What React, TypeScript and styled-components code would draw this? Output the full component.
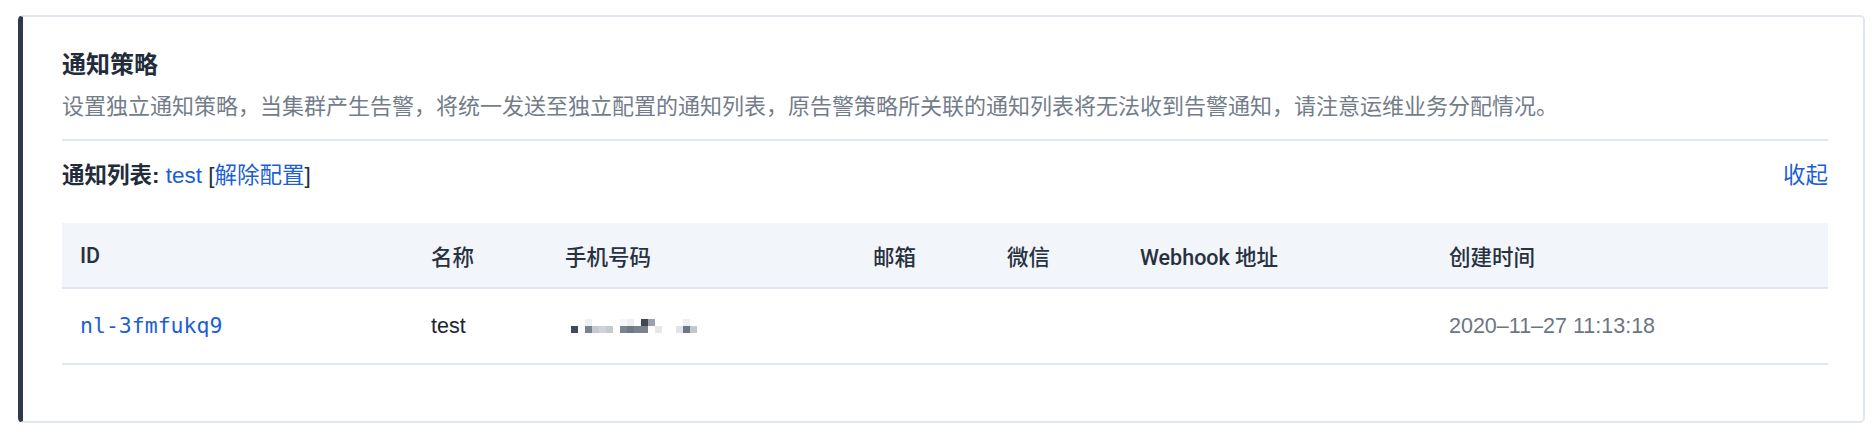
import styled, { createGlobalStyle } from "styled-components";

const GlobalStyle = createGlobalStyle`
  body {
    margin: 0;
    background: #ffffff;
    font-family: "Liberation Sans", "Noto Sans CJK SC", sans-serif;
  }
`;

interface Receiver {
  id: string;
  name: string;
  createdAt: string;
}

const receivers: Receiver[] = [
  { id: "nl-3fmfukq9", name: "test", createdAt: "2020–11–27 11:13:18" },
];

const columns = [
  { title: "ID", width: 351 },
  { title: "名称", width: 134 },
  { title: "手机号码", width: 308 },
  { title: "邮箱", width: 134 },
  { title: "微信", width: 133 },
  { title: "Webhook 地址", width: 309 },
  { title: "创建时间", width: 397 },
];

// pixelated (mosaic) phone number, cells of 7px: [column, row, colour]
const mosaic: [number, number, string][] = [
  [0, 1, "#3f4a5a"],
  [2, 0, "#eeeff1"],
  [2, 1, "#7a8290"],
  [3, 1, "#c5cad0"],
  [4, 1, "#cfd3d8"],
  [5, 1, "#c5cad0"],
  [7, 0, "#f6f7f8"],
  [7, 1, "#7a8290"],
  [8, 0, "#eeeff1"],
  [8, 1, "#6e7784"],
  [9, 1, "#7a8290"],
  [10, 0, "#3d4757"],
  [10, 1, "#7a8290"],
  [11, 0, "#9ba1aa"],
  [12, 1, "#e5e7ea"],
  [15, 1, "#e1e4e7"],
  [16, 0, "#eeeff1"],
  [16, 1, "#6e7784"],
  [17, 1, "#c2c7cd"],
];

export default function App() {
  return (
    <Page>
      <GlobalStyle />
      <Card>
        <Title>通知策略</Title>
        <Description>
          设置独立通知策略，当集群产生告警，将统一发送至独立配置的通知列表，原告警策略所关联的通知列表将无法收到告警通知，请注意运维业务分配情况。
        </Description>
        <ListBar>
          <div>
            <Label>通知列表:</Label> <Link>test</Link> [<Link>解除配置</Link>]
          </div>
          <Link>收起</Link>
        </ListBar>
        <Table>
          <colgroup>
            {columns.map((c) => (
              <col key={c.title} style={{ width: c.width }} />
            ))}
          </colgroup>
          <thead>
            <tr>
              {columns.map((c) => (
                <Th key={c.title}>{c.title}</Th>
              ))}
            </tr>
          </thead>
          <tbody>
            {receivers.map((r) => (
              <tr key={r.id}>
                <Td>
                  <IdLink>{r.id}</IdLink>
                </Td>
                <Td>{r.name}</Td>
                <Td>
                  <Mosaic width="126" height="14" viewBox="0 0 126 14">
                    {mosaic.map(([x, y, fill], i) => (
                      <rect key={i} x={x * 7} y={y * 7} width="7" height="7" fill={fill} />
                    ))}
                  </Mosaic>
                </Td>
                <Td />
                <Td />
                <Td />
                <Td $muted>{r.createdAt}</Td>
              </tr>
            ))}
          </tbody>
        </Table>
      </Card>
    </Page>
  );
}

const Page = styled.div`
  padding: 15px 11px 22px 18px;
`;

const Card = styled.div`
  border: 2px solid #dfe6ee;
  border-left: 5px solid #2e3a4a;
  border-radius: 5px;
  padding: 32px 35px 56px 39px;
  background: #fff;
`;

const Title = styled.h2`
  margin: 0;
  font-size: 24px;
  line-height: 32px;
  font-weight: 700;
  color: #222c3a;
`;

const Description = styled.p`
  margin: 10px 0 0;
  padding-bottom: 16px;
  border-bottom: 2px solid #dfe6ee;
  font-size: 22px;
  line-height: 32px;
  color: #737d8a;
`;

const ListBar = styled.div`
  margin-top: 19px;
  display: flex;
  justify-content: space-between;
  align-items: center;
  font-size: 22.5px;
  line-height: 32px;
  color: #222c3a;
`;

const Label = styled.span`
  font-weight: 700;
`;

const Link = styled.a`
  color: #1c5ed8;
  cursor: pointer;
`;

const Table = styled.table`
  margin-top: 31px;
  width: 100%;
  table-layout: fixed;
  border-collapse: collapse;
`;

const Th = styled.th`
  height: 64px;
  padding: 0 18px;
  text-align: left;
  background: #f2f5f9;
  border-bottom: 2px solid #dfe6ee;
  font-family: Roboto, "Noto Sans CJK SC", sans-serif;
  font-size: 21.5px;
  font-weight: 500;
  color: #27313f;
  white-space: nowrap;
`;

const Td = styled.td<{ $muted?: boolean }>`
  height: 74px;
  padding: 0 18px;
  border-bottom: 2px solid #dfe6ee;
  font-size: 21.5px;
  color: ${(p) => (p.$muted ? "#6b7583" : "#1d2530")};
  white-space: nowrap;
`;

const IdLink = styled.a`
  font-family: "DejaVu Sans Mono", "Liberation Mono", monospace;
  font-size: 21.5px;
  color: #1c5ed8;
  cursor: pointer;
`;

const Mosaic = styled.svg`
  display: block;
  margin-left: 6px;
`;
